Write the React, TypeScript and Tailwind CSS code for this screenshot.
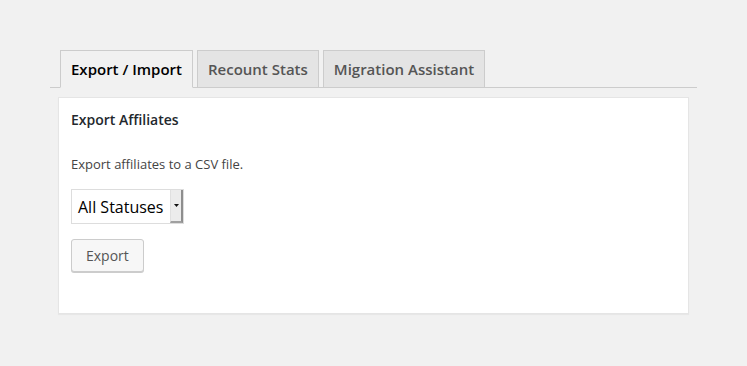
import React from "react";

const tabs = ["Export / Import", "Recount Stats", "Migration Assistant"];

const App = () => {
    const active = 0;

    return (
        <div className="min-h-[366px] bg-[#f1f1f1] px-[50px] pt-[50px] font-['Open_Sans',sans-serif] text-[#444]">
            {/* Tabs */}
            <div className="flex gap-[4px] border-b border-[#ccc] pl-[10px]">
                {tabs.map((tab, i) => (
                    <div
                        key={tab}
                        className={
                            i === active
                                ? "-mb-px border border-[#ccc] border-b-[#f1f1f1] bg-[#f1f1f1] px-[10px] py-[6px] text-[15px] leading-[24px] font-semibold text-black"
                                : "-mb-px border border-[#ccc] bg-[#e4e4e4] px-[10px] py-[6px] text-[15px] leading-[24px] font-semibold text-[#555]"
                        }
                    >
                        {tab}
                    </div>
                ))}
            </div>

            {/* Panel */}
            <div className="mx-[8px] mt-[9px] border border-[#e5e5e5] bg-white px-[12px] pt-[12px] pb-[41px] shadow-[0_1px_1px_rgba(0,0,0,0.04)]">
                <h3 className="text-[14px] leading-[20px] font-semibold text-[#23282d]">
                    Export Affiliates
                </h3>
                <p className="mt-[24px] text-[13px] leading-[20px] text-[#444]">
                    Export affiliates to a CSV file.
                </p>

                {/* Select */}
                <div className="mt-[15px] flex h-[35px] w-[113px] border border-[#ddd] bg-white">
                    <div className="flex flex-1 items-center pl-[6px] text-[16px] text-black">
                        All Statuses
                    </div>
                    <div className="flex w-[13px] items-center justify-center border-r-2 border-b-2 border-r-[#8e8e8e] border-b-[#a0a0a0] border-l border-l-[#e0e0e0] bg-[#ececec]">
                        <svg width="5" height="3" viewBox="0 0 5 3">
                            <path d="M0 0h5L2.5 3z" fill="#111" />
                        </svg>
                    </div>
                </div>

                {/* Button */}
                <button className="mt-[15px] flex h-[33px] items-center rounded-[3px] border border-[#ccc] bg-[#f7f7f7] px-[14px] text-[14px] text-[#555] shadow-[0_1px_0_#ccc]">
                    Export
                </button>
            </div>
        </div>
    );
};

export default App;
